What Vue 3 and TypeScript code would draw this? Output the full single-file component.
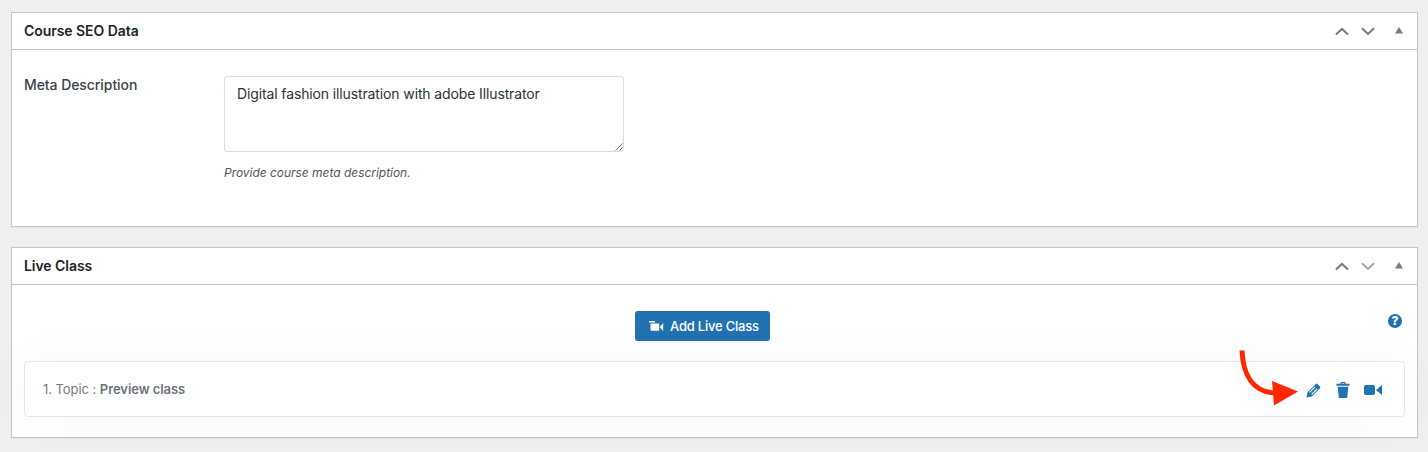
<script setup lang="ts">
import { ref } from 'vue'

interface PanelInfo {
  id: string
  title: string
  canMoveDown: boolean
}

const panels: PanelInfo[] = [
  { id: 'seo', title: 'Course SEO Data', canMoveDown: true },
  { id: 'live', title: 'Live Class', canMoveDown: false },
]
const description = ref('Digital fashion illustration with adobe Illustrator')
const topics = ref([{ id: 1, name: 'Preview class' }])
</script>

<template>
  <main class="page">
    <section v-for="panel in panels" :key="panel.id" class="panel" :class="panel.id">
      <header class="panel-head">
        <h2>{{ panel.title }}</h2>
        <div class="handles">
          <svg width="14" height="9" viewBox="0 0 14 9"><path d="M.9 7.6 7 1.9l6.1 5.7" /></svg>
          <svg width="14" height="9" viewBox="0 0 14 9" :class="{ disabled: !panel.canMoveDown }"><path d="M.9 1.2 7 6.9l6.1-5.7" /></svg>
          <svg class="toggle" width="8" height="8" viewBox="0 0 8 8"><path d="M4 0 8 6.4H0z" /></svg>
        </div>
      </header>

      <div v-if="panel.id === 'seo'" class="seo-body">
        <label class="field-label" for="meta">Meta Description</label>
        <div class="field">
          <div class="area-wrap">
            <textarea id="meta" v-model="description" spellcheck="false"></textarea>
            <svg class="grip" width="8" height="8" viewBox="0 0 8 8"><path d="M.5 7.5l7-7M4.5 7.5l3-3" /></svg>
          </div>
          <p class="hint">Provide course meta description.</p>
        </div>
      </div>

      <div v-else class="live-body">
        <div class="toolbar">
          <button class="add" type="button">
            <svg width="15" height="11" viewBox="0 0 15 11"><path d="M0 0h6v1.6H0zM1.5 2.5h8.7V9.7H2.5a1 1 0 0 1-1-1zM11.1 5.5 14.2 2v8l-3.1-3.2z" /></svg>
            <span>Add Live Class</span>
          </button>
          <span class="help">?</span>
        </div>
        <div v-for="(topic, i) in topics" :key="topic.id" class="row">
          <p class="topic"><span>{{ i + 1 }}. Topic :</span> <strong>{{ topic.name }}</strong></p>
          <div class="actions">
            <svg class="pencil" width="15" height="15" viewBox="0 0 15 15">
              <path class="fill" d="M.4 14.6 1.6 9.2 9.8 1q.9-.9 1.8 0l2.4 2.4q.9.9 0 1.8L5.8 13.4z" />
              <path class="cut" d="M3.6 9.3 9 3.9M5.7 11.4 11.1 6" />
            </svg>
            <svg class="trash" width="14" height="16" viewBox="0 0 14 16">
              <path class="fill" d="M.5 1.8h13v2H.5zM1.7 4.7h10.6L11.2 16H2.8z" />
              <path class="lid" d="M4.7 2.2q0-1.5 1.2-1.5h2.2q1.2 0 1.2 1.5" />
            </svg>
            <svg class="camera" width="18" height="10" viewBox="0 0 18 10">
              <path class="fill" d="M2 0h7q2 0 2 2v6q0 2-2 2H2Q0 10 0 8V2Q0 0 2 0zM12 5l6-5v10z" />
            </svg>
          </div>
          <svg class="arrow" width="60" height="56" viewBox="0 0 60 56">
            <path class="shaft" d="M4 .5C5 25 15 42.5 38 43" />
            <path class="tip" d="M34 31 60 41.5 36 55.5z" />
          </svg>
        </div>
      </div>
    </section>
  </main>
</template>

<style>
body {
  margin: 0;
  background: #efefef;
}
</style>

<style scoped>
.page {
  height: 452px;
  box-sizing: border-box;
  padding: 12px 10px 0 11px;
  overflow: hidden;
  display: flex;
  flex-direction: column;
  gap: 20px;
  background: #efefef;
  font-family: Inter, "Liberation Sans", sans-serif;
  font-size: 14px;
  color: #3c434a;
}
.panel {
  box-sizing: border-box;
  background: #fff;
  border: 1px solid #c3c4c7;
  box-shadow: 0 1px 1px rgba(0, 0, 0, 0.04);
}
.seo { height: 215px; }
.live { height: 191px; }
.panel-head {
  height: 36px;
  padding: 0 14px 0 12px;
  display: flex;
  align-items: center;
  justify-content: space-between;
  border-bottom: 1px solid #c3c4c7;
}
h2 {
  margin: 0;
  font-size: 14px;
  line-height: 20px;
  font-weight: 600;
  letter-spacing: -0.06px;
  color: #1d2327;
}
.handles {
  display: flex;
  align-items: center;
  gap: 12px;
}
.handles svg {
  fill: none;
  stroke: #787c82;
  stroke-width: 2.1;
}
.handles .disabled { stroke: #a7aaad; }
.handles .toggle {
  margin-left: 8px;
  fill: #787c82;
  stroke: none;
}
.seo-body {
  display: flex;
  padding: 26px 12px 0;
}
.field-label {
  width: 200px;
  line-height: 18px;
  font-weight: 500;
  letter-spacing: -0.07px;
}
.area-wrap {
  position: relative;
  width: 400px;
  height: 76px;
}
textarea {
  display: block;
  box-sizing: border-box;
  width: 400px;
  height: 76px;
  padding: 7px 12px;
  resize: none;
  border: 1px solid #dcdcde;
  border-radius: 3px;
  background: #fff;
  color: #2c3338;
  font: inherit;
  line-height: 20px;
  letter-spacing: -0.125px;
  outline: none;
}
.grip {
  position: absolute;
  right: 1px;
  bottom: 1px;
  fill: none;
  stroke: #444;
  stroke-width: 0.8;
}
.hint {
  margin: 12px 0 0;
  font-size: 12px;
  line-height: 18px;
  font-style: italic;
  letter-spacing: -0.03px;
  color: #50575e;
}
.live-body { padding: 26px 12px 0; }
.toolbar {
  position: relative;
  display: flex;
  justify-content: center;
  height: 30px;
  padding-right: 24px;
}
.add {
  display: flex;
  align-items: center;
  gap: 6px;
  width: 135px;
  height: 30px;
  padding: 0 0 0 14px;
  border: 0;
  border-radius: 3px;
  background: #2271b1;
  color: #fff;
  font: 500 13px/20px Inter, "Liberation Sans", sans-serif;
  letter-spacing: -0.22px;
  white-space: nowrap;
}
.add svg { fill: #fff; }
.help {
  position: absolute;
  top: 3px;
  right: 3px;
  width: 14px;
  height: 14px;
  border-radius: 50%;
  background: #2271b1;
  color: #fff;
  font-size: 12px;
  line-height: 14px;
  font-weight: 800;
  text-align: center;
}
.row {
  position: relative;
  box-sizing: border-box;
  height: 56px;
  margin-top: 20px;
  padding: 0 22px 0 18px;
  display: flex;
  align-items: center;
  justify-content: space-between;
  border: 1px solid #dfe7ef;
  border-radius: 4px;
  background: #fff;
  box-shadow: 0 0 50px rgba(0, 20, 20, 0.035);
}
.topic {
  margin: 0;
  font-size: 13px;
  line-height: 20px;
  letter-spacing: -0.06px;
  color: #757b85;
  white-space: nowrap;
}
.topic strong {
  font-weight: 600;
  color: #6b737c;
}
.actions {
  display: flex;
  align-items: center;
  padding-top: 2px;
}
.fill { fill: #2271b1; }
.cut {
  fill: none;
  stroke: #fff;
  stroke-width: 1.1;
}
.lid {
  fill: none;
  stroke: #2271b1;
  stroke-width: 1.2;
}
.trash { margin-left: 15px; }
.camera { margin-left: 14px; }
.arrow {
  position: absolute;
  left: 1213px;
  top: -12px;
}
.shaft {
  fill: none;
  stroke: #ff2600;
  stroke-width: 5;
}
.tip { fill: #ff2600; }
</style>
